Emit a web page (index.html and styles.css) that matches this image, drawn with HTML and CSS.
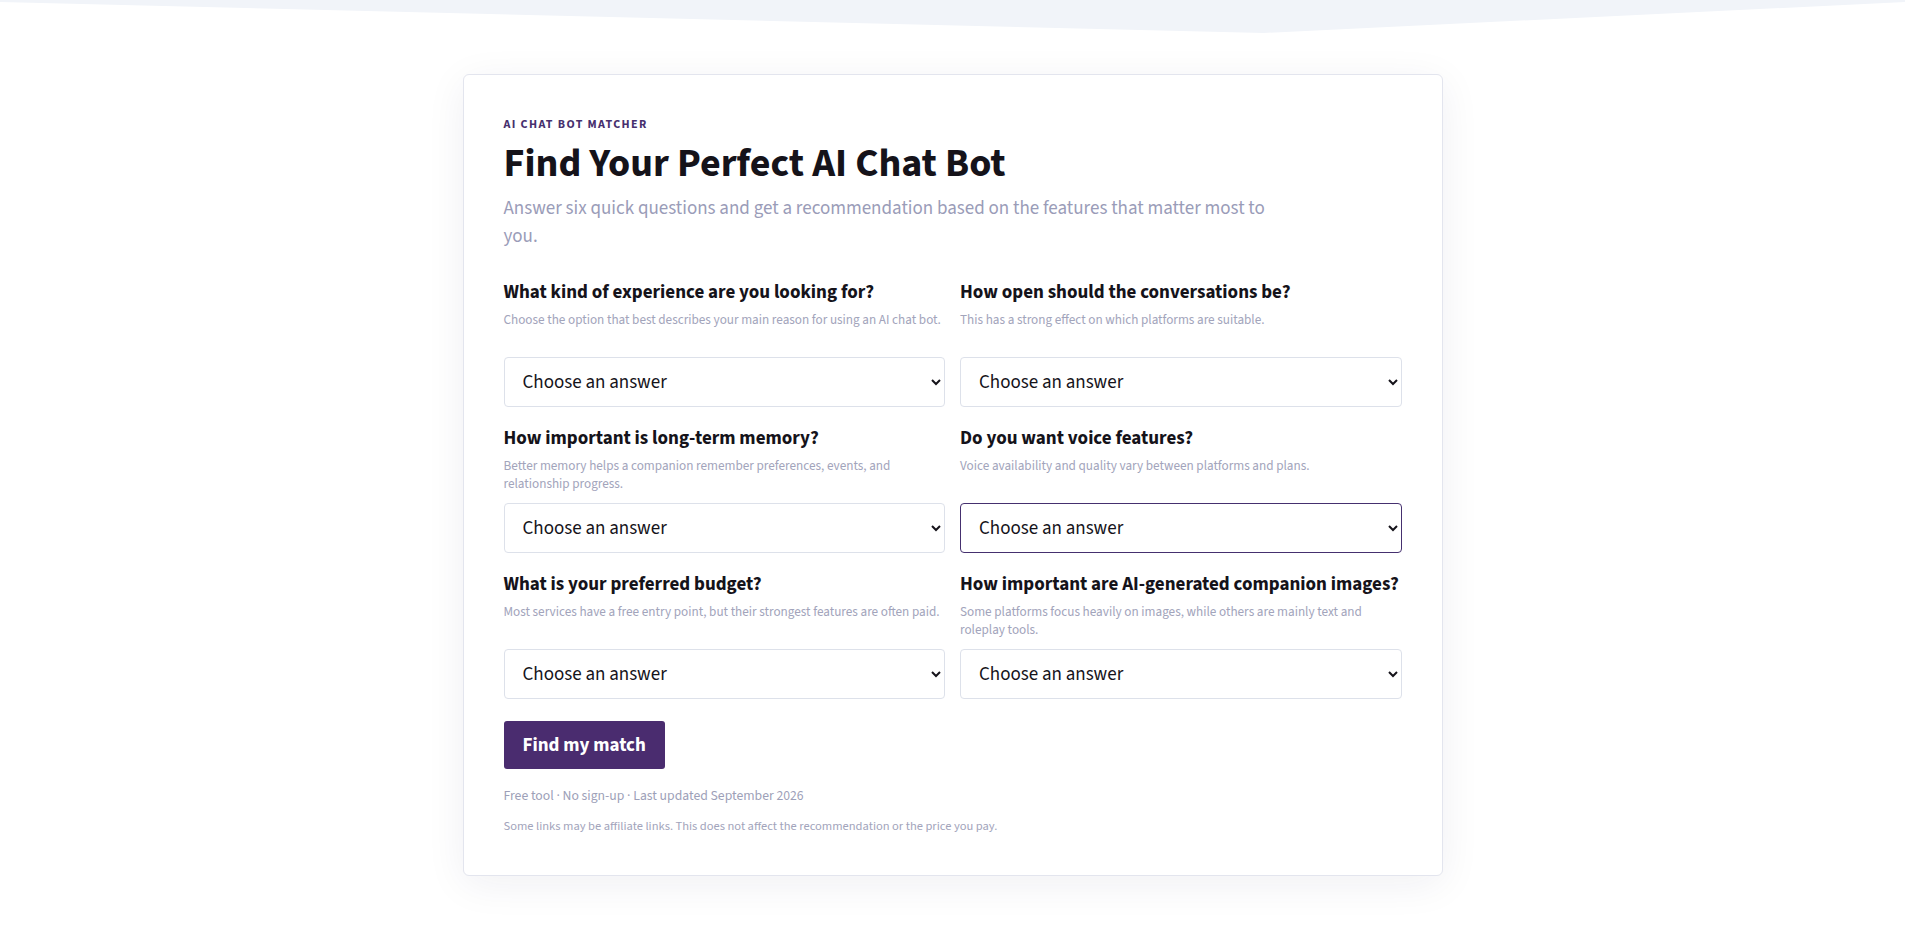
FILE: index.html
```html
<!DOCTYPE html>
<html lang="en">
<head>
<meta charset="utf-8">
<title>AI Chat Bot Matcher</title>
<link rel="stylesheet" href="styles.css">
</head>
<body>
<div class="top-band"></div>
<main class="page">
  <section class="card">
    <p class="eyebrow">AI CHAT BOT MATCHER</p>
    <h1 class="title">Find Your Perfect AI Chat Bot</h1>
    <p class="lead">Answer six quick questions and get a recommendation based on the features that matter most to you.</p>

    <form class="quiz">
      <div class="field">
        <label class="q-label">What kind of experience are you looking for?</label>
        <p class="q-help">Choose the option that best describes your main reason for using an AI chat bot.</p>
        <select class="q-select"><option>Choose an answer</option></select>
      </div>
      <div class="field">
        <label class="q-label">How open should the conversations be?</label>
        <p class="q-help">This has a strong effect on which platforms are suitable.</p>
        <select class="q-select"><option>Choose an answer</option></select>
      </div>
      <div class="field">
        <label class="q-label">How important is long-term memory?</label>
        <p class="q-help">Better memory helps a companion remember preferences, events, and relationship progress.</p>
        <select class="q-select"><option>Choose an answer</option></select>
      </div>
      <div class="field">
        <label class="q-label">Do you want voice features?</label>
        <p class="q-help">Voice availability and quality vary between platforms and plans.</p>
        <select class="q-select is-focused"><option>Choose an answer</option></select>
      </div>
      <div class="field">
        <label class="q-label">What is your preferred budget?</label>
        <p class="q-help">Most services have a free entry point, but their strongest features are often paid.</p>
        <select class="q-select"><option>Choose an answer</option></select>
      </div>
      <div class="field">
        <label class="q-label">How important are AI-generated companion images?</label>
        <p class="q-help">Some platforms focus heavily on images, while others are mainly text and roleplay tools.</p>
        <select class="q-select"><option>Choose an answer</option></select>
      </div>
    </form>

    <button class="cta" type="button">Find my match</button>
    <p class="meta">Free tool · No sign-up · Last updated September 2026</p>
    <p class="disclaimer">Some links may be affiliate links. This does not affect the recommendation or the price you pay.</p>
  </section>
</main>
</body>
</html>
```

FILE: styles.css
```css
* { box-sizing: border-box; }

html, body {
  margin: 0;
  padding: 0;
  background: #ffffff;
  font-family: "Source Sans Pro", "Source Sans 3", Lato, "Noto Sans", sans-serif;
  color: #15131a;
}

.top-band {
  height: 33px;
  background: #f1f4f9;
  clip-path: polygon(0 0, 100% 0, 100% 2px, 66.35% 33px, 0 2px);
}

.page {
  display: flex;
  justify-content: center;
  padding: 41px 0 50px;
}

.card {
  width: 980px;
  background: #ffffff;
  border: 1px solid #e3e5ee;
  border-radius: 6px;
  box-shadow: 0 8px 40px rgba(30, 30, 80, 0.065);
  padding: 42px 40px 41px;
}

.eyebrow {
  margin: 0;
  font-size: 12px;
  line-height: 16px;
  font-weight: 700;
  letter-spacing: 1.4px;
  color: #47306e;
}

.title {
  margin: 7px 0 0;
  font-size: 40px;
  line-height: 48px;
  font-weight: 700;
  color: #15131a;
}

.lead {
  margin: 7px 0 0;
  max-width: 780px;
  font-size: 19px;
  line-height: 28px;
  color: #9a9cb8;
}

.quiz {
  margin-top: 30px;
  display: grid;
  grid-template-columns: 1fr 1fr;
  column-gap: 15px;
  row-gap: 20px;
}

.field {
  display: flex;
  flex-direction: column;
}

.q-label {
  font-size: 19px;
  line-height: 24px;
  font-weight: 700;
  color: #15131a;
}

.q-help {
  margin: 6px 0 0;
  min-height: 36px;
  font-size: 13.2px;
  line-height: 18px;
  color: #a2a4bb;
}

.q-select {
  margin-top: 10px;
  height: 50px;
  width: 100%;
  padding: 0 8px 0 14px;
  font-family: inherit;
  font-size: 19px;
  color: #15131a;
  background-color: #ffffff;
  border: 1px solid #dde1ea;
  border-radius: 4px;
}

.q-select.is-focused {
  border-color: #45306f;
}

.cta {
  align-self: flex-start;
  margin-top: 22px;
  height: 48px;
  padding: 0 19px;
  background: #4a2c6f;
  color: #ffffff;
  border: none;
  border-radius: 3px;
  font-family: inherit;
  font-size: 19px;
  font-weight: 700;
}

.meta {
  margin: 18px 0 0;
  font-size: 13.7px;
  line-height: 18px;
  color: #9d9fb8;
}

.disclaimer {
  margin: 13px 0 0;
  font-size: 12.5px;
  line-height: 16px;
  color: #a2a4bb;
}
```
